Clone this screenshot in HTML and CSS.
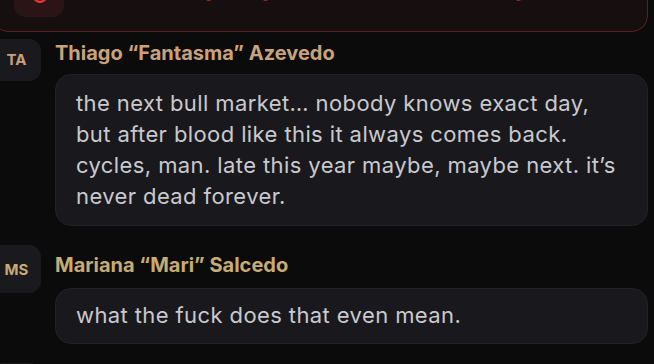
FILE: index.html
```html
<!DOCTYPE html>
<html lang="en">
<head>
  <meta charset="UTF-8" />
  <meta name="viewport" content="width=device-width, initial-scale=1.0" />
  <title>Group chat</title>
  <link rel="stylesheet" href="styles.css">
</head>
<body>

<div class="feed">

  <div class="alert-card">
    <div class="alert-avatar">
      <svg width="20" height="20" viewBox="0 0 20 20"><circle cx="10" cy="10" r="6" fill="none" stroke="#e3323b" stroke-width="2.4"/></svg>
    </div>
    <div class="alert-text">everybody getting liquidated, pray for the guys</div>
  </div>

  <div class="msg">
    <div class="avatar avatar-ta">TA</div>
    <div class="msg-body">
      <div class="name name-thiago">Thiago “Fantasma” Azevedo</div>
      <div class="bubble">the next bull market… nobody knows exact day, but after blood like this it always comes back. cycles, man. late this year maybe, maybe next. it’s never dead forever.</div>
    </div>
  </div>

  <div class="msg">
    <div class="avatar avatar-ms">MS</div>
    <div class="msg-body">
      <div class="name name-mari">Mariana “Mari” Salcedo</div>
      <div class="bubble">what the fuck does that even mean.</div>
    </div>
  </div>

  <div class="msg">
    <div class="avatar"></div>
  </div>

</div>

</body>
</html>
```

FILE: styles.css
```css
body {
  margin: 0;
  background-color: #0b0b0c;
  font-family: Inter, "Noto Sans", sans-serif;
  overflow: hidden;
}

.feed {
  margin: -48px 6px 0 -8px;
  display: flex;
  flex-direction: column;
}

/* red flagged message, mostly scrolled away */
.alert-card {
  display: flex;
  align-items: flex-end;
  gap: 26px;
  height: 80px;
  box-sizing: border-box;
  padding: 0 16px 14px 21px;
  background-color: #170e0f;
  border: 1px solid #5a2125;
  border-radius: 16px;
}

.alert-avatar {
  width: 50px;
  height: 50px;
  flex-shrink: 0;
  border-radius: 12px;
  background-color: #2a1416;
  display: flex;
  align-items: center;
  justify-content: center;
}

.alert-avatar svg {
  margin-top: 8px;
  margin-left: 2px;
}

.alert-text {
  color: #e0444b;
  font-size: 20px;
  line-height: 32px;
  letter-spacing: 0.6px;
  padding-bottom: 12px;
  white-space: nowrap;
}

.msg {
  display: flex;
  gap: 14px;
  margin-top: 1px;
  margin-left: -1px;
}

.msg + .msg {
  margin-top: 19px;
}

.avatar {
  width: 50px;
  height: 48px;
  flex-shrink: 0;
  border-radius: 12px;
  background-color: #1a1a1e;
  display: flex;
  align-items: center;
  justify-content: center;
  font-size: 15px;
  font-weight: 700;
  padding-left: 1px;
  box-sizing: border-box;
}

.avatar-ta {
  height: 42px;
  margin-top: 6px;
  color: #c9a27c;
  align-items: flex-start;
  padding-top: 11px;
}

.avatar-ms {
  color: #c6ab72;
}

.msg-body {
  flex: 1;
  min-width: 0;
}

.name {
  font-size: 20px;
  font-weight: 700;
  line-height: 24px;
  margin-top: 8px;
}

.name-thiago {
  color: #c9a27c;
}

.name-mari {
  color: #c6ab72;
}

.bubble {
  margin-top: 9px;
  padding: 13px 20px 13px;
  background-color: #19191d;
  border: 1px solid #222226;
  border-radius: 16px;
  color: #c9c9ce;
  font-size: 22px;
  line-height: 31px;
  letter-spacing: 0.4px;
}

.name-mari + .bubble {
  margin-top: 11px;
  padding-top: 11px;
  padding-bottom: 12px;
}
```
